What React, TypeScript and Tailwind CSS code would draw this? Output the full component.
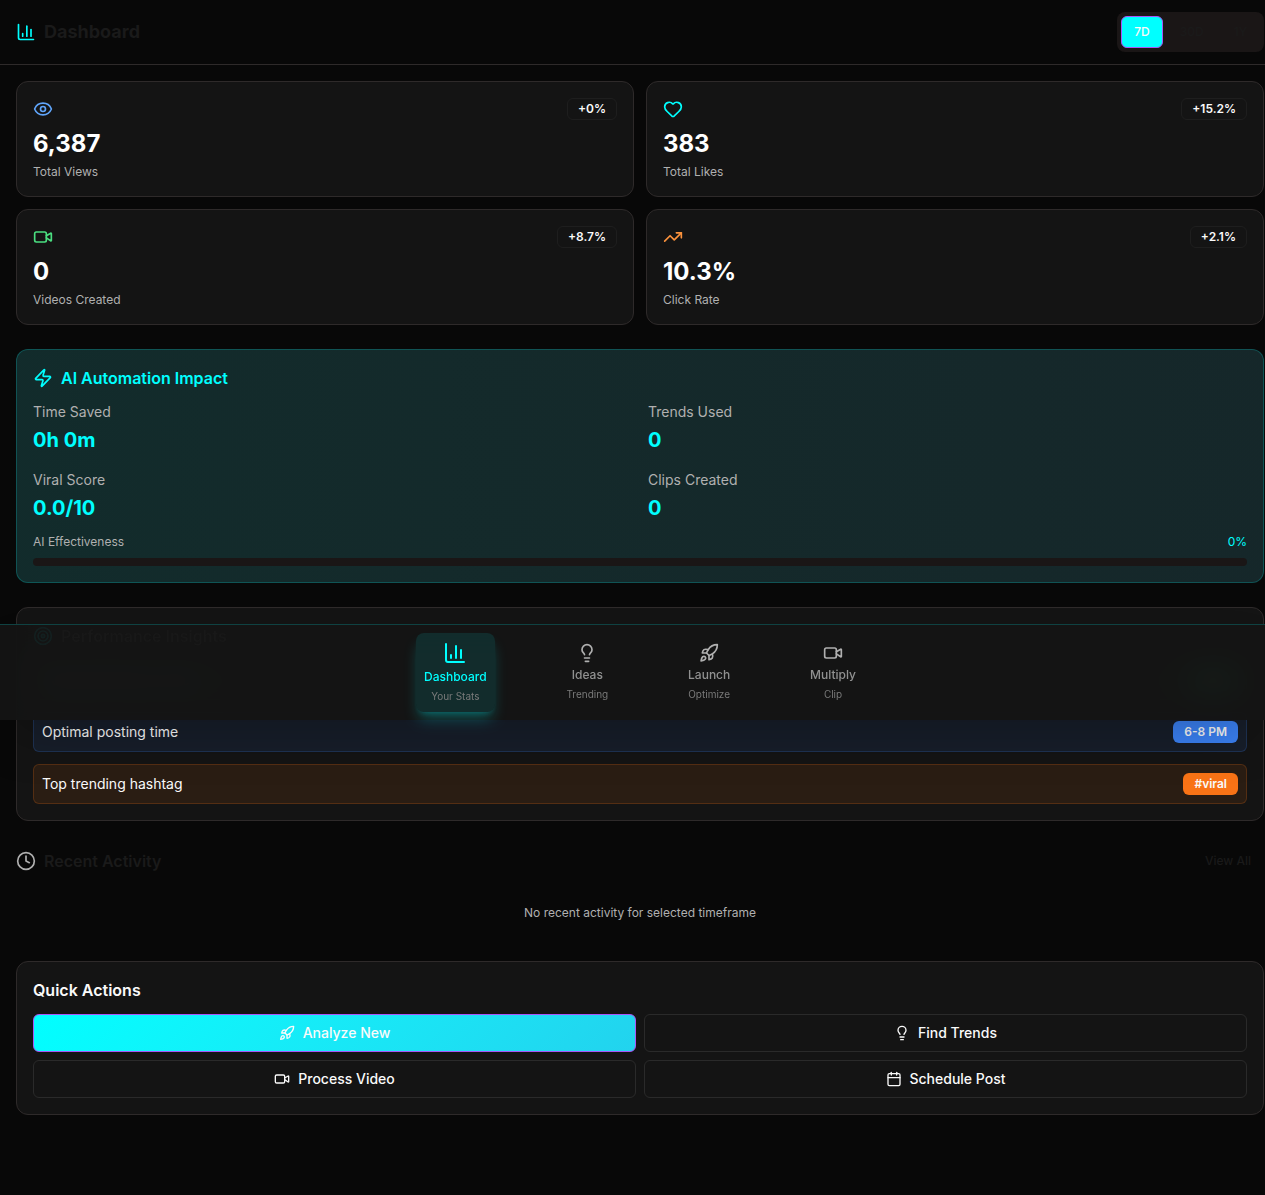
import type { ReactNode } from "react";
import {
  Calendar,
  ChartColumn,
  Clock,
  Eye,
  Heart,
  Lightbulb,
  Rocket,
  Target,
  TrendingUp,
  Video,
  Zap,
  type LucideIcon,
} from "lucide-react";

const card = "rounded-xl border border-[#2e2a2a] bg-[#141414]";

type Stat = { icon: LucideIcon; tint: string; change: string; value: string; label: string };

const stats: Stat[] = [
  { icon: Eye, tint: "text-[#60a5fa]", change: "+0%", value: "6,387", label: "Total Views" },
  { icon: Heart, tint: "text-[#00ffff]", change: "+15.2%", value: "383", label: "Total Likes" },
  { icon: Video, tint: "text-[#4ade80]", change: "+8.7%", value: "0", label: "Videos Created" },
  { icon: TrendingUp, tint: "text-[#fb923c]", change: "+2.1%", value: "10.3%", label: "Click Rate" },
];

const impact = [
  { label: "Time Saved", value: "0h 0m" },
  { label: "Trends Used", value: "0" },
  { label: "Viral Score", value: "0.0/10" },
  { label: "Clips Created", value: "0" },
];

const insights = [
  { label: "Best performing content", badge: "Tech", row: "border-[#22c55e]/20 bg-[#22c55e]/10", chip: "bg-[#22c55e]" },
  { label: "Optimal posting time", badge: "6-8 PM", row: "border-[#3b82f6]/20 bg-[#3b82f6]/10", chip: "bg-[#3b82f6]" },
  { label: "Top trending hashtag", badge: "#viral", row: "border-[#f97316]/20 bg-[#f97316]/10", chip: "bg-[#f97316]" },
];

const tabs = [
  { icon: ChartColumn, label: "Dashboard", hint: "Your Stats", active: true },
  { icon: Lightbulb, label: "Ideas", hint: "Trending", active: false },
  { icon: Rocket, label: "Launch", hint: "Optimize", active: false },
  { icon: Video, label: "Multiply", hint: "Clip", active: false },
];

const ranges = ["7D", "30D", "1Y"];

function StatCard({ icon: Icon, tint, change, value, label }: Stat) {
  return (
    <article className={`${card} p-4`}>
      <div className="mb-2 flex items-center justify-between">
        <Icon className={`size-5 ${tint}`} />
        <span className="rounded-md border border-[#1e1e1e] px-2.5 py-0.5 text-xs font-semibold text-[#fafafa]">
          {change}
        </span>
      </div>
      <div className="mb-1 text-2xl font-bold text-white">{value}</div>
      <div className="text-xs text-[#b0b0b0]">{label}</div>
    </article>
  );
}

function ActionButton({ icon: Icon, primary, children }: { icon: LucideIcon; primary?: boolean; children: ReactNode }) {
  return (
    <button
      type="button"
      className={`flex items-center justify-center gap-2 rounded-md border px-4 py-2 text-sm font-medium ${
        primary
          ? "border-[#a855f7] bg-linear-135 from-[#00ffff] to-[#22d3ee] text-[#fafafa]"
          : "border-[#2a2a2a] text-[#fafafa]"
      }`}
    >
      <Icon className="size-4" />
      {children}
    </button>
  );
}

export default function App() {
  return (
    <div className="relative min-h-screen bg-[#080808] font-['Inter',sans-serif] text-[#fafafa]">
      <header className="flex items-center justify-between border-b border-[#2e2a2a] py-3 pr-px pl-4">
        <h1 className="flex items-center gap-2 text-lg font-bold text-[#1a1a1a]">
          <ChartColumn className="size-5 text-[#00ffff]" />
          Dashboard
        </h1>
        <div className="flex gap-1 rounded-lg bg-[#1a1616] p-1">
          {ranges.map((range, i) => (
            <button
              key={range}
              type="button"
              className={`h-8 rounded-md border px-3 text-xs font-medium ${
                i === 0 ? "border-[#a855f7] bg-[#00ffff] text-[#fafafa]" : "border-transparent text-[#1a1a1a]"
              }`}
            >
              {range}
            </button>
          ))}
        </div>
      </header>

      <main className="flex flex-col gap-6 pt-4 pr-px pb-20 pl-4">
        <section className="grid grid-cols-2 gap-3">
          {stats.map((stat) => (
            <StatCard key={stat.label} {...stat} />
          ))}
        </section>

        <section className="rounded-xl border border-[#00ffff]/20 bg-[#141414] bg-linear-to-r from-[#00ffff]/10 to-[#22d3ee]/10 p-4">
          <h2 className="mb-3 flex items-center gap-2 font-semibold text-[#00ffff]">
            <Zap className="size-5" />
            AI Automation Impact
          </h2>
          <dl className="grid grid-cols-2 gap-4">
            {impact.map(({ label, value }) => (
              <div key={label}>
                <dt className="mb-1 text-sm text-[#b0b0b0]">{label}</dt>
                <dd className="text-xl font-bold text-[#00ffff]">{value}</dd>
              </div>
            ))}
          </dl>
          <div className="mt-3 mb-2 flex justify-between text-xs">
            <span className="text-[#b0b0b0]">AI Effectiveness</span>
            <span className="text-[#00ffff]">0%</span>
          </div>
          <div className="h-2 rounded-full bg-[#1a1616]" />
        </section>

        <section className={`${card} p-4`}>
          <h2 className="relative z-10 mb-3 flex items-center gap-2 font-semibold text-[#1a1a1a]/70">
            <Target className="size-5 text-[#00ffff]/5" />
            Performance Insights
          </h2>
          <ul className="flex flex-col gap-3">
            {insights.map(({ label, badge, row, chip }) => (
              <li key={label} className={`flex items-center justify-between rounded-md border p-2 ${row}`}>
                <span className="text-sm">{label}</span>
                <span className={`rounded-md border border-transparent px-2.5 py-0.5 text-xs font-semibold ${chip}`}>
                  {badge}
                </span>
              </li>
            ))}
          </ul>
        </section>

        <section>
          <div className="mb-3 flex items-center justify-between">
            <h2 className="flex items-center gap-2 font-semibold text-[#1a1a1a]">
              <Clock className="size-5 text-[#b0b0b0]" />
              Recent Activity
            </h2>
            <button
              type="button"
              className="h-8 rounded-md border border-transparent px-3 text-xs font-medium text-[#1a1a1a]"
            >
              View All
            </button>
          </div>
          <p className="py-4 text-center text-xs text-[#b0b0b0]">No recent activity for selected timeframe</p>
        </section>

        <section className={`${card} p-4`}>
          <h2 className="mb-3 font-semibold">Quick Actions</h2>
          <div className="grid grid-cols-2 gap-2">
            <ActionButton icon={Rocket} primary>
              Analyze New
            </ActionButton>
            <ActionButton icon={Lightbulb}>Find Trends</ActionButton>
            <ActionButton icon={Video}>Process Video</ActionButton>
            <ActionButton icon={Calendar}>Schedule Post</ActionButton>
          </div>
        </section>
      </main>

      <nav className="absolute inset-x-0 top-[624px] border-t border-[#00ffff]/20 bg-[#141414]/95 py-2 pr-px pl-4 shadow-2xl backdrop-blur-lg">
        <div className="mx-auto flex max-w-md items-center justify-between">
          {tabs.map(({ icon: Icon, label, hint, active }) => (
            <a
              key={label}
              href={`#${label.toLowerCase()}`}
              className={`flex flex-col items-center rounded-lg p-2 ${
                active
                  ? "bg-[#00ffff]/10 text-[#00ffff] shadow-lg shadow-[#00ffff]/25"
                  : "text-[#b0b0b0]"
              }`}
            >
              <Icon className={active ? "mb-1 size-6" : "mb-1 size-5"} />
              <span className={`text-xs font-medium ${active ? "" : "opacity-80"}`}>{label}</span>
              <span className="mt-1 text-[10px] leading-[15px] text-[#7a7a7a]">{hint}</span>
            </a>
          ))}
        </div>
      </nav>
    </div>
  );
}
